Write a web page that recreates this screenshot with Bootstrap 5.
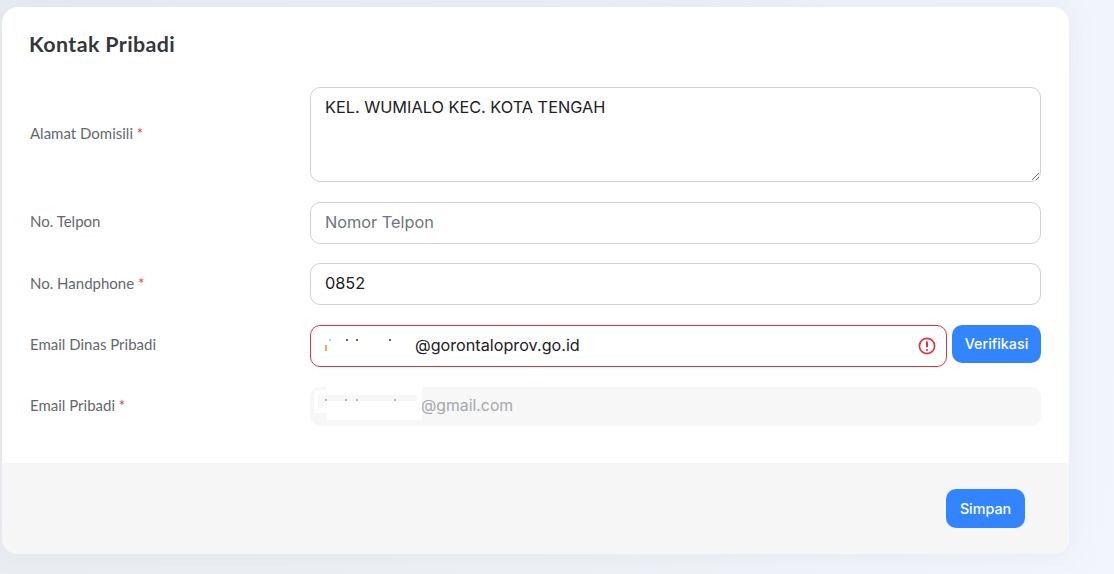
<!DOCTYPE html>
<html lang="id">
<head>
<meta charset="utf-8">
<title>Kontak Pribadi</title>
<link href="https://cdn.jsdelivr.net/npm/bootstrap@5.3.0/dist/css/bootstrap.min.css" rel="stylesheet">
<style>
html,body{height:100%}
body{background:linear-gradient(100deg,#e9edf2 0%,#eef1f6 60%,#f2f5fb 100%);font-family:"Lato","Liberation Sans",sans-serif;overflow:hidden}
.page-wrap{padding:7px 45px 0 2px}
.panel{height:547px;border:0;border-radius:16px;overflow:hidden;box-shadow:0 0 30px rgba(120,130,150,.08)}
.panel-body{padding:21px 28px 0;flex:1 1 auto}
.panel-title{font-family:"Lato",sans-serif;font-size:21.4px;font-weight:700;line-height:33px;color:#33383c;margin:0 0 26px -1px;letter-spacing:.4px}
.field-label{width:280px;flex:none;font-size:15px;color:#63686d;margin:0;padding-bottom:3px}
.label-low{padding-bottom:1px}
.req{color:#e5323e}
.fld{border:1px solid #ced1d6;border-radius:10px;height:42px;padding:0 14px 2px;font-family:"Inter",sans-serif;font-size:16.3px;color:#1c2126;box-shadow:none}
.fld::placeholder{color:#6c757d}
textarea.fld{height:95px;padding:8px 14px;line-height:22px;resize:both}
.row-a,.row-c,.row-d{margin-bottom:20px}
.row-b{margin-bottom:19px}
.fld-err{border-color:#dc3545;padding-left:104px;padding-right:34px;font-size:16.2px}
.fld-off{background:#f7f7f8;border-color:#f7f7f8;color:#a6a8ab;height:39px;padding-left:110px;padding-bottom:3px;font-size:15.8px}
.fld-off:disabled{background:#f7f7f8}
.err-ico{position:absolute;right:11px;top:12px;width:18px;height:18px}
.mask{position:absolute;background:#fff}
.mask-main{left:17px;top:0;width:95px;height:33px}
.mask-side{left:4px;top:3px;width:13px;height:23px}
.mask-tint{position:absolute;background:#f7f7f8}
.tint-a{left:8px;top:8px;width:99px;height:6px}
.tint-b{left:8px;top:8px;width:6px;height:13px}
.speck{position:absolute;width:2px;height:2px;background:#5b5f66}
.e1{left:19px;top:14px;background:#a9d3f5}
.e2{left:36px;top:14px}
.e3{left:46px;top:14px;background:#8a5a2c}
.e4{left:79px;top:14px}
.eo{left:15px;top:20px;height:6px;background:#f5a550}
.g1{left:15px;top:12px;background:#b5b6b8}
.g2{left:35px;top:12px;background:#b5b6b8}
.g3{left:46px;top:12px;background:#b5b6b8}
.g4{left:84px;top:12px;background:#b5b6b8}
.btn-blue{background:#3385ff;border:0;border-radius:10px;color:#fff;font-family:"Inter",sans-serif;font-size:14.3px;font-weight:500;height:38px;padding:0;white-space:nowrap}
.btn-blue:hover{background:#3385ff;color:#fff}
.btn-verif{width:89px;flex:none}
.btn-save{width:79px;height:39px}
.panel-foot{height:91px;background:#f6f6f6;padding:26px 44px}
.gap-five{gap:5px}
</style>
</head>
<body>
<div class="page-wrap">
<div class="card panel d-flex flex-column">
  <div class="panel-body">
    <h5 class="panel-title">Kontak Pribadi</h5>
    <div class="d-flex align-items-center row-a">
      <label class="field-label">Alamat Domisili <span class="req">*</span></label>
      <textarea class="form-control fld">KEL. WUMIALO KEC. KOTA TENGAH</textarea>
    </div>
    <div class="d-flex align-items-center row-b">
      <label class="field-label">No. Telpon</label>
      <input class="form-control fld" placeholder="Nomor Telpon">
    </div>
    <div class="d-flex align-items-center row-c">
      <label class="field-label label-low">No. Handphone <span class="req">*</span></label>
      <input class="form-control fld" value="0852">
    </div>
    <div class="d-flex align-items-center row-d">
      <label class="field-label">Email Dinas Pribadi</label>
      <div class="d-flex align-items-start flex-grow-1 gap-five">
        <div class="position-relative flex-grow-1">
          <input class="form-control fld fld-err" value="@gorontaloprov.go.id">
          <span class="speck e1"></span><span class="speck e2"></span><span class="speck e3"></span><span class="speck e4"></span><span class="speck eo"></span>
          <svg class="err-ico" viewBox="0 0 18 18" fill="none" stroke="#dc3545" stroke-width="1.7"><circle cx="9" cy="9" r="7.6"/><path d="M9 4.6v5.6" stroke-width="2"/><circle cx="9" cy="13" r="1.1" fill="#dc3545" stroke="none"/></svg>
        </div>
        <button type="button" class="btn btn-blue btn-verif">Verifikasi</button>
      </div>
    </div>
    <div class="d-flex align-items-center">
      <label class="field-label">Email Pribadi <span class="req">*</span></label>
      <div class="position-relative flex-grow-1">
        <input class="form-control fld fld-off" value="@gmail.com" disabled>
        <span class="mask mask-main"></span>
        <span class="mask mask-side"></span>
        <span class="mask-tint tint-a"></span>
        <span class="mask-tint tint-b"></span>
        <span class="speck g1"></span><span class="speck g2"></span><span class="speck g3"></span><span class="speck g4"></span>
      </div>
    </div>
  </div>
  <div class="panel-foot d-flex justify-content-end">
    <button type="button" class="btn btn-blue btn-save">Simpan</button>
  </div>
</div>
</div>
</body>
</html>
